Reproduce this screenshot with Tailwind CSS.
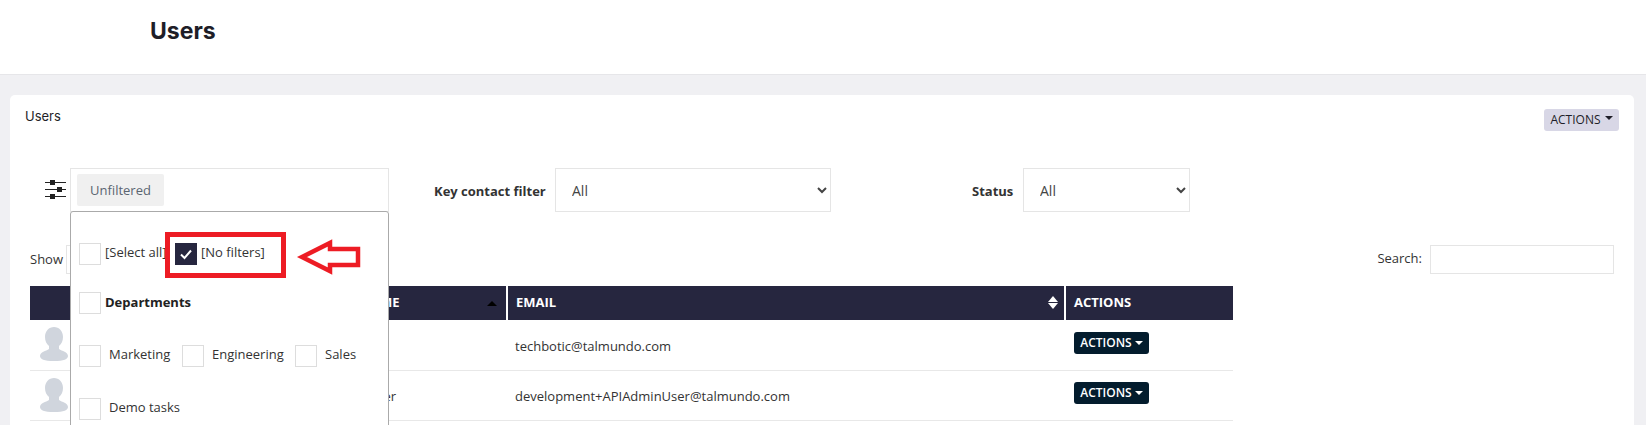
<!DOCTYPE html>
<html lang="en">
<head>
<meta charset="utf-8">
<title>Users</title>
<script src="https://cdn.jsdelivr.net/npm/@tailwindcss/browser@4"></script>
</head>
<body class="relative h-[425px] overflow-hidden bg-[#f0f0f3] font-['Open_Sans',sans-serif] text-[13px] text-[#333]">
<header class="flex h-[75px] items-start border-b border-[#e6e6e9] bg-white pl-[150px] pt-[16px]">
  <h1 class="font-['Inter',sans-serif] text-[23px] leading-[30px] font-bold text-[#1e1e28]">Users</h1>
</header>
<main class="pl-[10px] pr-[12px] pt-[20px]">
  <section class="h-[400px] rounded-[5px] bg-white pt-[14px]">
    <div class="flex h-[22px] items-start justify-between px-[15px]">
      <h2 class="font-['Inter',sans-serif] text-[13px] leading-[14px] text-[#1e1e28]">Users</h2>
      <button class="flex h-[22px] w-[75px] items-center justify-center gap-[4px] rounded-[3px] bg-[#d8d7e6] text-[12px] text-[#1e1e28]">ACTIONS<span class="mb-[4px] h-0 w-0 border-x-[4px] border-t-[4px] border-x-transparent border-t-[#1e1e28]"></span></button>
    </div>
    <div class="mt-[37px] flex items-start pl-[35px]">
      <svg class="mt-[12px] mr-[4px] h-[20px] w-[21px]" viewBox="0 0 21 20" fill="#222">
        <rect x="0" y="2" width="21" height="1"/><rect x="5" y="0" width="5" height="5"/>
        <rect x="0" y="9" width="21" height="1"/><rect x="12" y="7" width="5" height="5"/>
        <rect x="0" y="16" width="21" height="1"/><rect x="5" y="14" width="5" height="5"/>
      </svg>
      <div class="relative h-[44px] w-[319px] border border-[#e5e5e5] pl-[6px] pt-[5px]">
        <div class="flex h-[32px] w-[87px] items-center justify-center rounded-[2px] bg-[#f0f0f0] pt-[2px] text-[#5b6570]">Unfiltered</div>
        <div class="absolute left-[-1px] top-[42px] z-10 h-[300px] w-[319px] rounded-[3px] border border-[#aaa] bg-white pl-[8px] pt-[31px] text-[13px]">
          <div class="flex items-start">
            <span class="h-[22px] w-[22px] border border-[#ddd]"></span>
            <span class="ml-[4px] w-[70px] leading-[19px] whitespace-nowrap">[Select all]</span>
            <span class="flex h-[22px] w-[22px] items-center justify-center bg-[#26263f]">
              <svg class="h-[12px] w-[12px]" viewBox="0 0 12 12" fill="none" stroke="#fff" stroke-width="2"><path d="M1 6.500 4.500 10 11 2.500"/></svg>
            </span>
            <span class="ml-[4px] leading-[19px]">[No filters]</span>
          </div>
          <div class="mt-[27px] flex items-start">
            <span class="h-[22px] w-[22px] border border-[#ddd]"></span>
            <span class="ml-[4px] font-bold leading-[20px] text-[#222]">Departments</span>
          </div>
          <div class="mt-[31px] flex items-start">
            <span class="h-[22px] w-[22px] border border-[#ddd]"></span>
            <span class="ml-[8px] w-[73px] leading-[18px]">Marketing</span>
            <span class="h-[22px] w-[22px] border border-[#ddd]"></span>
            <span class="ml-[8px] w-[83px] leading-[18px]">Engineering</span>
            <span class="h-[22px] w-[22px] border border-[#ddd]"></span>
            <span class="ml-[8px] leading-[18px]">Sales</span>
          </div>
          <div class="mt-[31px] flex items-start">
            <span class="h-[22px] w-[22px] border border-[#ddd]"></span>
            <span class="ml-[8px] leading-[18px]">Demo tasks</span>
          </div>
        </div>
      </div>
      <label class="ml-[45px] mt-[14px] w-[111px] font-bold whitespace-nowrap text-[#333]">Key contact filter</label>
      <select aria-label="Key contact filter" class="ml-[10px] h-[44px] w-[276px] border border-[#e5e5e5] bg-white pl-[12px] text-[14px] text-[#444]"><option>All</option></select>
      <label class="ml-[141px] mt-[14px] w-[41px] font-bold text-[#333]">Status</label>
      <select aria-label="Status" class="ml-[10px] h-[44px] w-[167px] border border-[#e5e5e5] bg-white pl-[12px] text-[14px] text-[#444]"><option>All</option></select>
    </div>
    <div class="mt-[33px] flex h-[29px] items-center justify-between px-[20px]">
      <div class="flex items-center gap-[6px]"><span class="w-[30px]">Show</span><span class="h-[29px] w-[60px] border border-[#e5e5e5]"></span></div>
      <div class="flex items-center gap-[8px]"><label class="mb-[2px]">Search:</label><input aria-label="Search" class="h-[29px] w-[184px] border border-[#e5e5e5] bg-white"></div>
    </div>
    <table class="mt-[12px] ml-[20px] w-[1203px] table-fixed border-collapse">
      <colgroup><col class="w-[60px]"><col class="w-[233px]"><col class="w-[184px]"><col class="w-[558px]"><col class="w-[168px]"></colgroup>
      <thead>
        <tr class="h-[34px] bg-[#26263f] text-left text-[13px] font-bold text-white">
          <th></th>
          <th class="border-r-2 border-white"></th>
          <th class="relative border-r-2 border-white pl-[2px] whitespace-nowrap">LAST NAME<span class="absolute right-[9px] top-[15px] h-0 w-0 border-x-[5px] border-b-[5px] border-x-transparent border-b-black"></span></th>
          <th class="relative border-r-2 border-white pl-[8px]">EMAIL
            <span class="absolute right-[6px] top-[10px] h-0 w-0 border-x-[5px] border-b-[6px] border-x-transparent border-b-white"></span>
            <span class="absolute right-[6px] top-[17px] h-0 w-0 border-x-[5px] border-t-[6px] border-x-transparent border-t-white"></span>
          </th>
          <th class="pl-[8px]">ACTIONS</th>
        </tr>
      </thead>
      <tbody>
        <tr class="h-[50px] border-b border-[#e8e8e8]">
          <td class="pl-[10px]"><svg class="mb-[1px] h-[34px] w-[28px]" viewBox="0 0 28 34" fill="#d0d5dd"><path d="M14 0c5 0 9 4 9 10 0 4-1.500 7-4 9v3c3 2 9 3 9 7 0 3-4 5-14 5S0 32 0 29c0-4 6-5 9-7v-3c-2.500-2-4-5-4-9C5 4 9 0 14 0Z"/></svg></td>
          <td></td>
          <td></td>
          <td class="pl-[8px] pt-[4px]">techbotic@talmundo.com</td>
          <td class="pl-[9px] pb-[4px]"><button class="flex h-[22px] w-[75px] items-center justify-center gap-[3px] rounded-[3px] bg-[#031c2d] text-[12px] font-semibold text-white">ACTIONS<span class="h-0 w-0 border-x-[4px] border-t-[4px] border-x-transparent border-t-white"></span></button></td>
        </tr>
        <tr class="h-[50px] border-b border-[#e8e8e8]">
          <td class="pl-[10px]"><svg class="mb-[1px] h-[34px] w-[28px]" viewBox="0 0 28 34" fill="#d0d5dd"><path d="M14 0c5 0 9 4 9 10 0 4-1.500 7-4 9v3c3 2 9 3 9 7 0 3-4 5-14 5S0 32 0 29c0-4 6-5 9-7v-3c-2.500-2-4-5-4-9C5 4 9 0 14 0Z"/></svg></td>
          <td></td>
          <td class="pl-[2px] pt-[4px]">Admin User</td>
          <td class="pl-[8px] pt-[4px]">development+APIAdminUser@talmundo.com</td>
          <td class="pl-[9px] pb-[4px]"><button class="flex h-[22px] w-[75px] items-center justify-center gap-[3px] rounded-[3px] bg-[#031c2d] text-[12px] font-semibold text-white">ACTIONS<span class="h-0 w-0 border-x-[4px] border-t-[4px] border-x-transparent border-t-white"></span></button></td>
        </tr>
      </tbody>
    </table>
  </section>
</main>
<div class="absolute left-[165px] top-[232px] z-20 h-[46px] w-[121px] border-[5px] border-[#ed1c24]"></div>
<svg class="absolute left-[293px] top-[238px] z-20 h-[38px] w-[69px]" viewBox="0 0 69 38" fill="none" stroke="#ed1c24" stroke-width="4.500"><path d="M9 19 37 5V11H65V27H37V33Z"/></svg>
</body>
</html>
